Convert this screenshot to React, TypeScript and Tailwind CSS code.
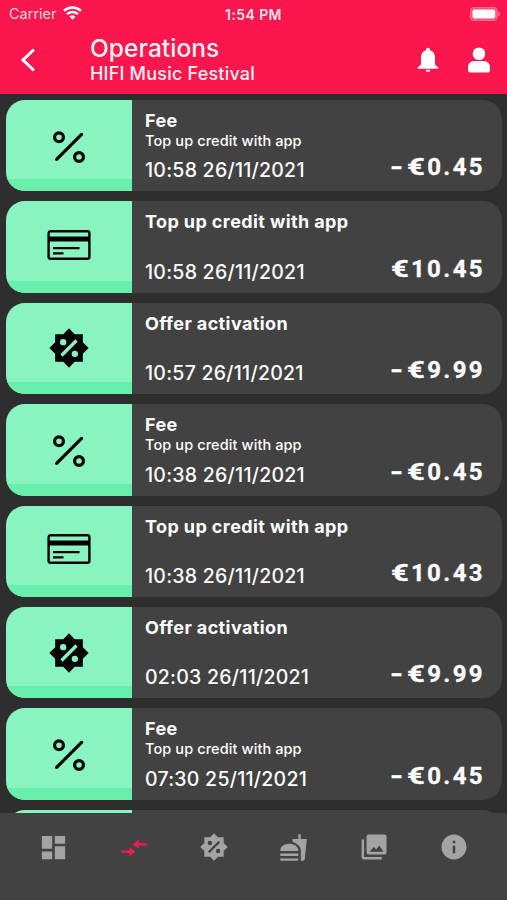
import { memo } from "react";
import { MdDashboard, MdFastfood, MdInfo } from "react-icons/md";

type Kind = "fee" | "topup" | "offer";

interface Operation {
  kind: Kind;
  title: string;
  subtitle?: string;
  date: string;
  amount: string;
  negative?: boolean;
}

const operations: Operation[] = [
  { kind: "fee", title: "Fee", subtitle: "Top up credit with app", date: "10:58 26/11/2021", amount: "0.45", negative: true },
  { kind: "topup", title: "Top up credit with app", date: "10:58 26/11/2021", amount: "10.45" },
  { kind: "offer", title: "Offer activation", date: "10:57 26/11/2021", amount: "9.99", negative: true },
  { kind: "fee", title: "Fee", subtitle: "Top up credit with app", date: "10:38 26/11/2021", amount: "0.45", negative: true },
  { kind: "topup", title: "Top up credit with app", date: "10:38 26/11/2021", amount: "10.43" },
  { kind: "offer", title: "Offer activation", date: "02:03 26/11/2021", amount: "9.99", negative: true },
  { kind: "fee", title: "Fee", subtitle: "Top up credit with app", date: "07:30 25/11/2021", amount: "0.45", negative: true },
];

const PercentIcon = () => (
  <svg className="w-[34px] h-[34px] mt-[2px]" viewBox="0 0 34 34" fill="none" stroke="#000" strokeWidth="3.2" strokeLinecap="round">
    <path d="M4.6 29.4 29.6 4.4" />
    <circle cx="7" cy="7.3" r="4.4" />
    <circle cx="27" cy="27" r="4.4" />
  </svg>
);

const CardIcon = () => (
  <svg className="w-[44px] h-[30px] mb-[4px]" viewBox="0 0 44 30">
    <rect x="1.6" y="1.3" width="40.8" height="27.4" rx="2" fill="none" stroke="#000" strokeWidth="2.4" />
    <path d="M1 6.5h42v5H1zM6 16.9h26.5v2.4H6zM6 22.2h10.5v2.4H6z" />
  </svg>
);

const BadgeIcon = ({ className }: { className: string }) => (
  <svg className={className} viewBox="0 0 24 24" fill="currentColor">
    <path
      fillRule="evenodd"
      d="M20.3 15.4 23.8 12l-3.5-3.4V3.7h-4.9L12 .2 8.6 3.7H3.7v4.9L.2 12l3.5 3.4v4.9h4.9l3.4 3.5 3.4-3.5h4.9zM8.5 6.6a1.9 1.9 0 1 1 0 3.8 1.9 1.9 0 0 1 0-3.8zm7 7a1.9 1.9 0 1 1 0 3.8 1.9 1.9 0 0 1 0-3.8zM8.2 17.2l-1.4-1.4 9-9 1.4 1.4z"
    />
  </svg>
);

const TransferIcon = () => (
  <svg className="w-[26px] h-[18px] ml-[1px] mt-[2px]" viewBox="0 0 26 18" fill="currentColor">
    <path d="M.3 11.6h8V8.3l6.2 4.5-6.2 4.500V14H.3zM25.700 4h-8V.7l-6.200 4.500 6.200 4.500V6.400h8z" />
  </svg>
);

const GalleryIcon = () => (
  <svg className="w-[26px] h-[26px]" viewBox="0 0 26 26" fill="currentColor">
    <path
      fillRule="evenodd"
      d="M7.500.6h16a2 2 0 0 1 2 2v16a2 2 0 0 1-2 2h-16a2 2 0 0 1-2-2v-16a2 2 0 0 1 2-2zM8.500 17.700h14l-4.200-6.200-3.100 4.100-2.300-2.700z"
    />
    <path d="M.6 5.600h2.500v17.500h17.600v2.500h-18a2.100 2.100 0 0 1-2.100-2.100z" />
  </svg>
);

const BellIcon = () => (
  <svg className="w-[22px] h-[26px]" viewBox="0 0 22 26" fill="#fff">
    <path d="M11 .7a2 2 0 0 0-2 2v.5C5.800 4.100 4 6.800 4 10v6c0 1.800-.8 3.200-3.200 4.200v1.500h20.400v-1.500c-2.400-1-3.200-2.400-3.200-4.200v-6c0-3.200-1.800-5.900-5-6.800v-.5a2 2 0 0 0-2-2zM8.700 22.700h4.600a2.300 2.300 0 0 1-4.600 0z" />
  </svg>
);

const UserIcon = () => (
  <svg className="w-[24px] h-[26px]" viewBox="0 0 24 26" fill="#fff">
    <circle cx="12" cy="6.7" r="6.3" />
    <path d="M7 14h10a6 6 0 0 1 6 6v3.500a2 2 0 0 1-2 2H3a2 2 0 0 1-2-2V20a6 6 0 0 1 6-6z" />
  </svg>
);

const kindIcon = {
  fee: <PercentIcon />,
  topup: <CardIcon />,
  offer: <BadgeIcon className="w-10 h-10 text-black" />,
};

const StatusBar = () => (
  <div className="h-7 grid grid-cols-3 items-center px-[7px]">
    <div className="flex items-center gap-[6px] pl-[2px] text-[#ffd3dc]">
      <span className="text-[14.5px]">Carrier</span>
      <svg className="w-[19px] h-[14px] mb-[2px]" viewBox="0 0 19 14" fill="none" stroke="#fff" strokeWidth="2.5">
        <path d="M1 4.800a12.300 12.300 0 0 1 17 0M4 8.200a8 8 0 0 1 11 0" />
        <path d="M6.500 10.500a4.500 4.500 0 0 1 6 0l-3 3.200z" fill="#fff" stroke="none" />
      </svg>
    </div>
    <span className="text-center font-semibold text-[14px] tracking-[0.4px] text-[#ffe3e8]">1:54 PM</span>
    <svg className="w-[31px] h-[14px] justify-self-end mb-[1px] -mr-[1px]" viewBox="0 0 31 14">
      <rect x=".6" y=".6" width="26.5" height="12.8" rx="3.5" fill="#fb4a73" stroke="#fd6a8c" strokeWidth="1.2" />
      <rect x="2.5" y="2.4" width="22.8" height="9.2" rx="2" fill="#fff" />
      <path d="M28.300 4.800a2.300 2.300 0 0 1 0 4.400z" fill="#ff8ba4" />
    </svg>
  </div>
);

const Header = () => (
  <header className="h-[94px] shrink-0 bg-[#fb174d] text-[#fff2f4]">
    <StatusBar />
    <div className="flex items-center h-[64px] pl-5 pr-4">
      <svg className="w-4 h-6" viewBox="0 0 16 24" fill="none" stroke="#fff" strokeWidth="3">
        <path d="M14 1.500 3 12l11 10.500" />
      </svg>
      <div className="ml-[54px] mb-[1px] flex-1 font-medium">
        <h1 className="text-[24.5px] leading-[28px] tracking-[0.05px]">Operations</h1>
        <p className="text-[18px] leading-[23px] tracking-[0.2px]">HIFI Music Festival</p>
      </div>
      <div className="flex items-center gap-[28px]">
        <BellIcon />
        <UserIcon />
      </div>
    </div>
  </header>
);

const OperationCard = memo(({ kind, title, subtitle, date, amount, negative }: Operation) => (
  <li className="flex h-[91.4px] shrink-0 rounded-[19px] overflow-hidden bg-[#424242]">
    <div className="w-[126px] flex items-center justify-center bg-[#88f4c0] border-b-[12px] border-[#68efac] pt-3">
      {kindIcon[kind]}
    </div>
    <div className="flex-1 flex flex-col pl-[13px] pt-[9px] pb-[7px] whitespace-nowrap">
      <h2 className="text-[18px] leading-[23px] font-bold tracking-[0.4px]">{title}</h2>
      {subtitle && <p className="text-[14.5px] leading-[17px] font-medium tracking-[0.1px]">{subtitle}</p>}
      <div className="flex items-end justify-between mt-auto pr-[17px]">
        <span className="text-[19.5px] leading-[26px] font-medium tracking-[0.25px] mb-[1px]">{date}</span>
        <div className="flex items-center font-['Roboto',sans-serif] font-bold text-[24px] leading-[33px] [-webkit-text-stroke:0.3px_white]">
          {negative && <span className="w-[10px] mr-[7px] origin-left scale-x-140">-</span>}
          <span className="w-[20px] origin-left scale-x-130">€</span>
          <span className="tracking-[2.4px]">{amount}</span>
        </div>
      </div>
    </div>
  </li>
));

const NavBar = () => (
  <nav className="h-[87px] shrink-0 grid grid-cols-6 px-[13px] pt-[18px] bg-[#424242] text-[#a3a3a3]">
    <button type="button" aria-label="dashboard" className="h-8 flex items-center justify-center">
      <MdDashboard className="w-[31px] h-[31px]" />
    </button>
    <button type="button" aria-label="operations" className="h-8 flex items-center justify-center text-[#ee1c50]">
      <TransferIcon />
    </button>
    <button type="button" aria-label="offers" className="h-8 flex items-center justify-center">
      <BadgeIcon className="w-7 h-7 ml-[1px]" />
    </button>
    <button type="button" aria-label="food" className="h-8 flex items-center justify-center">
      <MdFastfood className="w-[29px] h-[29px]" />
    </button>
    <button type="button" aria-label="gallery" className="h-8 flex items-center justify-center">
      <GalleryIcon />
    </button>
    <button type="button" aria-label="info" className="h-8 flex items-center justify-center">
      <MdInfo className="w-[30px] h-[30px]" />
    </button>
  </nav>
);

export default function App() {
  return (
    <div className="w-[507px] h-[900px] flex flex-col overflow-hidden bg-[#2e2e2e] text-white font-['Inter',sans-serif]">
      <Header />
      <main className="flex-1 min-h-0 overflow-hidden">
        <ul className="flex flex-col gap-[10px] pl-[6px] pr-[5px] pt-[6px]">
          {operations.map((op, i) => (
            <OperationCard key={i} {...op} />
          ))}
          {/* next row, only its top edge is scrolled into view */}
          <li className="flex h-[91px] shrink-0 rounded-[19px] overflow-hidden bg-[#424242]">
            <div className="w-[126px] bg-[#88f4c0]" />
          </li>
        </ul>
      </main>
      <NavBar />
    </div>
  );
}
